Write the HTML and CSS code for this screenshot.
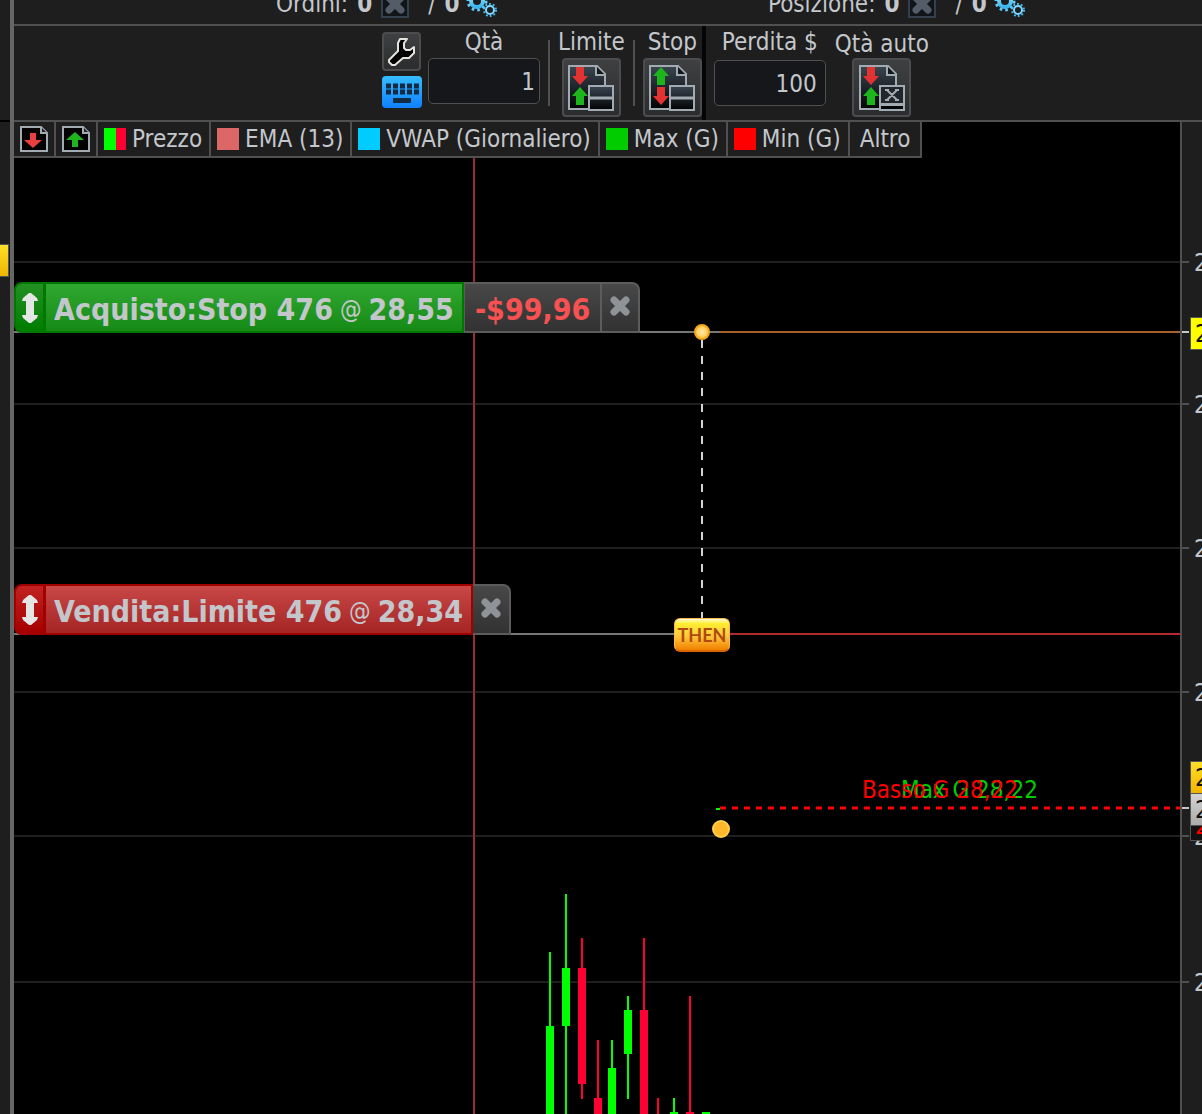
FILE: index.html
```
<!DOCTYPE html>
<html lang="it">
<head>
    <meta charset="UTF-8">
    <meta name="viewport" content="width=device-width, initial-scale=1.0">
    <title>Grafico ordini</title>
    <link rel="stylesheet" href="styles.css">
</head>
<body>
    <!-- Shared icon shapes -->
    <svg class="defs" aria-hidden="true">
        <defs>
            <linearGradient id="page" x1="0" y1="0" x2="0" y2="1">
                <stop offset="0" stop-color="#3a4651"/>
                <stop offset="1" stop-color="#020203"/>
            </linearGradient>
            <linearGradient id="gear" x1="0" y1="0" x2="0" y2="1">
                <stop offset="0" stop-color="#9fe2ff"/>
                <stop offset="1" stop-color="#36b4ee"/>
            </linearGradient>
            <linearGradient id="blue" x1="0" y1="0" x2="0" y2="1">
                <stop offset="0" stop-color="#36bcff"/>
                <stop offset="1" stop-color="#0f80ff"/>
            </linearGradient>
            <radialGradient id="dot">
                <stop offset="0" stop-color="#ffe9a8"/>
                <stop offset="1" stop-color="#ffc445"/>
            </radialGradient>
            <symbol id="i-doc" viewBox="0 0 46 46">
                <path d="M1 1h28l8 8v35H1z" fill="url(#page)" stroke="#a3abb2" stroke-width="2"/>
                <path d="M28 1v9h9" fill="#15181b" stroke="#a3abb2" stroke-width="2"/>
            </symbol>
            <symbol id="i-up" viewBox="0 0 16 18">
                <path d="M8 0l8 9h-4v9H4V9H0z"/>
            </symbol>
            <symbol id="i-down" viewBox="0 0 16 18">
                <path d="M8 18l8-9h-4V0H4v9H0z"/>
            </symbol>
            <symbol id="i-gears" viewBox="0 0 32 28">
                <circle cx="11" cy="11" r="6" fill="none" stroke="url(#gear)" stroke-width="4"/>
                <circle cx="11" cy="11" r="9" fill="none" stroke="#62cbf8" stroke-width="3" stroke-dasharray="2.6 3"/>
                <circle cx="24" cy="20" r="4" fill="none" stroke="#7fd8ff" stroke-width="2"/>
                <circle cx="24" cy="20" r="6" fill="none" stroke="#44bdf2" stroke-width="2" stroke-dasharray="1.8 2"/>
            </symbol>
            <symbol id="i-x" viewBox="0 0 20 20">
                <path d="M4 4l12 12M16 4L4 16" fill="none" stroke-width="7" stroke-linecap="round"/>
            </symbol>
            <symbol id="i-move" viewBox="0 0 16 30">
                <path d="M7 0h2l6 5 1 3h-4v14h4l-1 3-6 5H7l-6-5-1-3h4V8H0l1-3z"/>
            </symbol>
        </defs>
    </svg>

    <aside class="side">
        <div class="side-tag"></div>
    </aside>

    <main class="main">
        <div class="counters">
            <div class="counter orders">
                <span>Ordini:</span>
                <b>0</b>
                <button class="btn-clear" aria-label="Annulla ordini"><svg width="20" height="20"><use href="#i-x"/></svg></button>
                <span>/</span>
                <b>0</b>
                <svg class="gears" width="32" height="28"><use href="#i-gears"/></svg>
            </div>
            <div class="counter">
                <span>Posizione:</span>
                <b>0</b>
                <button class="btn-clear" aria-label="Chiudi posizione"><svg width="20" height="20"><use href="#i-x"/></svg></button>
                <span>/</span>
                <b>0</b>
                <svg class="gears" width="32" height="28"><use href="#i-gears"/></svg>
            </div>
        </div>

        <div class="toolbar">
            <div class="tools">
                <button class="btn btn-small" aria-label="Impostazioni">
                    <svg width="28" height="28" viewBox="0 0 28 28">
                        <path d="M12 1h7l-3 4v5l2 2h4l4-3v6l-5 5h-6l-8 7H4l-3-3v-2l9-9V5z" fill="#000" stroke="#e6e3de" stroke-width="2" stroke-linejoin="round"/>
                    </svg>
                </button>
                <button class="btn-keys" aria-label="Tastiera">
                    <svg width="40" height="32" viewBox="0 0 40 32">
                        <rect width="40" height="32" rx="4" fill="url(#blue)"/>
                        <path d="M4 10h33M4 16h33" stroke="#122b42" stroke-width="5" stroke-dasharray="5 2"/>
                        <rect x="11" y="22" width="18" height="5" rx="1" fill="#122b42"/>
                    </svg>
                </button>
            </div>
            <div class="field">
                <label for="qty">Qtà</label>
                <input class="qty" id="qty" type="text" value="1">
            </div>
            <div class="divider"></div>
            <div class="field">
                <label for="limit">Limite</label>
                <button class="btn btn-big" id="limit">
                    <svg width="46" height="46">
                        <use href="#i-doc" width="46" height="46"/>
                        <use href="#i-down" x="4" y="2" width="16" height="18" fill="#e23232"/>
                        <use href="#i-up" x="4" y="22" width="16" height="18" fill="#1cb51c"/>
                        <rect x="21" y="21" width="24" height="24" fill="url(#page)" stroke="#a3abb2" stroke-width="2"/>
                        <path d="M21 33h24" stroke="#a3abb2" stroke-width="3"/>
                    </svg>
                </button>
            </div>
            <div class="divider"></div>
            <div class="field stop">
                <label for="stop">Stop</label>
                <button class="btn btn-big" id="stop">
                    <svg width="46" height="46">
                        <use href="#i-doc" width="46" height="46"/>
                        <use href="#i-up" x="4" y="2" width="16" height="18" fill="#1cb51c"/>
                        <use href="#i-down" x="4" y="22" width="16" height="18" fill="#e23232"/>
                        <rect x="21" y="21" width="24" height="24" fill="url(#page)" stroke="#a3abb2" stroke-width="2"/>
                        <path d="M21 33h24" stroke="#a3abb2" stroke-width="3"/>
                    </svg>
                </button>
            </div>
            <div class="field loss">
                <label for="loss">Perdita $</label>
                <input id="loss" type="text" value="100">
            </div>
            <div class="field auto">
                <label for="auto">Qtà auto</label>
                <button class="btn btn-big" id="auto">
                    <svg width="46" height="46">
                        <use href="#i-doc" width="46" height="46"/>
                        <use href="#i-down" x="4" y="2" width="16" height="18" fill="#e23232"/>
                        <use href="#i-up" x="4" y="22" width="16" height="18" fill="#1cb51c"/>
                        <rect x="21" y="21" width="24" height="24" fill="#050607" stroke="#a3abb2" stroke-width="2"/>
                        <rect x="21" y="21" width="24" height="18" fill="#20262c" stroke="#a3abb2" stroke-width="2"/>
                        <path d="M28 25l10 10M38 25L28 35M26 25h4M36 25h4M26 35h4M36 35h4M22 40h22" fill="none" stroke="#a3abb2" stroke-width="2"/>
                    </svg>
                </button>
            </div>
        </div>

        <div class="workspace">
            <div class="chart">
                <svg class="plot" width="100%" height="100%">
                    <g class="grid">
                        <rect y="139" width="100%" height="2"/>
                        <rect y="281" width="100%" height="2"/>
                        <rect y="425" width="100%" height="2"/>
                        <rect y="569" width="100%" height="2"/>
                        <rect y="713" width="100%" height="2"/>
                        <rect y="859" width="100%" height="2"/>
                    </g>
                    <rect x="459" width="2" height="100%" fill="#9a2d33"/>

                    <!-- Order lines -->
                    <rect y="209" width="100%" height="2" fill="#a5642f"/>
                    <rect y="209" width="706" height="2" fill="#777"/>
                    <rect y="511" width="100%" height="2" fill="#b52a31"/>
                    <rect y="511" width="688" height="2" fill="#777"/>
                    <line x1="688" y1="218" x2="688" y2="496" stroke="#d0d3d8" stroke-width="2" stroke-dasharray="8 8"/>
                    <circle cx="688" cy="210" r="7" fill="url(#dot)" stroke="#f5a614" stroke-width="2"/>

                    <!-- Daily high and low -->
                    <rect x="702" y="686" width="4" height="2" fill="#00ff00"/>
                    <line x1="706" y1="686" x2="100%" y2="686" stroke="#ff0000" stroke-width="3" stroke-dasharray="6 6"/>
                    <circle cx="707" cy="707" r="8" fill="#ffb72b" stroke="#ffcf45" stroke-width="2"/>
                    <text x="887" y="676" fill="#00cc00">Max G 28,22</text>
                    <text x="848" y="676" fill="#ff0000">Basso G 28,22</text>

                    <g id="candles"></g>
                </svg>

                <div class="legend">
                    <button class="icon" aria-label="Riduci">
                        <svg width="28" height="26">
                            <path d="M1 1h20l6 6v18H1z" fill="#000" stroke="#a3abb2" stroke-width="2"/>
                            <path d="M21 1v6h6" fill="#222" stroke="#a3abb2" stroke-width="2"/>
                            <path d="M13 22l9-8h-6V7h-6v7H4z" fill="#e8403c"/>
                        </svg>
                    </button>
                    <button class="icon" aria-label="Espandi">
                        <svg width="28" height="26">
                            <path d="M1 1h20l6 6v18H1z" fill="#000" stroke="#a3abb2" stroke-width="2"/>
                            <path d="M21 1v6h6" fill="#222" stroke="#a3abb2" stroke-width="2"/>
                            <path d="M13 6l9 8h-6v7h-6v-7H4z" fill="#1fb51f"/>
                        </svg>
                    </button>
                    <button><i class="swatch price"></i>Prezzo</button>
                    <button><i class="swatch ema"></i>EMA (13)</button>
                    <button><i class="swatch vwap"></i>VWAP (Giornaliero)</button>
                    <button><i class="swatch max"></i>Max (G)</button>
                    <button><i class="swatch min"></i>Min (G)</button>
                    <button class="more">Altro</button>
                </div>

                <div class="order buy">
                    <button class="handle" aria-label="Sposta"><svg width="16" height="30"><use href="#i-move"/></svg></button>
                    <div class="order-text">Acquisto:Stop 476 <span class="at">@</span> 28,55</div>
                    <div class="pnl">-$99,96</div>
                    <button class="close" aria-label="Annulla"><svg width="20" height="20"><use href="#i-x"/></svg></button>
                </div>
                <div class="order sell">
                    <button class="handle" aria-label="Sposta"><svg width="16" height="30"><use href="#i-move"/></svg></button>
                    <div class="order-text">Vendita:Limite 476 <span class="at">@</span> 28,34</div>
                    <button class="close" aria-label="Annulla"><svg width="20" height="20"><use href="#i-x"/></svg></button>
                </div>
                <div class="then">THEN</div>
            </div>

            <div class="axis" id="axis"></div>
        </div>
    </main>

    <script src="chart.js"></script>
</body>
</html>
```
FILE: styles.css
```
* {
    box-sizing: border-box;
}
body {
    margin: 0;
    height: 100vh;
    display: flex;
    overflow: hidden;
    background-color: #1e1e1e;
    color: #c3c7cc;
    fill: #c3c7cc;
    font-family: "DejaVu Sans Condensed", "Noto Sans", sans-serif;
    font-size: 24px;
    line-height: 28px;
}
button, input {
    font: inherit;
    color: inherit;
    margin: 0;
    padding: 0;
    border: none;
    background: none;
}
button {
    display: flex;
    align-items: center;
    justify-content: center;
    cursor: pointer;
}
.defs {
    position: absolute;
    width: 0;
    height: 0;
}

/* Left panel */
.side {
    width: 10px;
    flex: none;
    padding-top: 244px;
    background: linear-gradient(#000, #000) 0 120px / 100% 2px no-repeat;
}
.side-tag {
    width: 9px;
    height: 33px;
    border: 1px solid #555;
    border-left: none;
    background: linear-gradient(#ffe028, #f0b400);
}
.main {
    flex: 1;
    min-width: 0;
    display: flex;
    flex-direction: column;
    border-left: 4px solid #666;
}

/* Counters */
.counters {
    height: 26px;
    flex: none;
    display: flex;
    align-items: flex-end;
    padding: 0 0 6px 262px;
    border-bottom: 2px solid #505050;
}
.counter {
    display: flex;
    align-items: center;
    gap: 9px;
}
.orders {
    width: 492px;
}
.btn-clear {
    width: 28px;
    height: 28px;
    margin-right: 10px;
    border: 2px solid #33404d;
    background-color: #111519;
    stroke: #545d67;
}
.gears {
    margin-left: -2px;
}

/* Toolbar */
.toolbar {
    height: 96px;
    flex: none;
    display: flex;
    align-items: stretch;
    padding-left: 368px;
    border-bottom: 2px solid #505050;
    white-space: nowrap;
}
.tools {
    padding-top: 6px;
    margin-right: 6px;
}
.btn {
    border: 2px solid #4c4c4e;
    border-radius: 4px;
    background: linear-gradient(#3f4042, #2b2c2e);
}
.btn-small {
    width: 39px;
    height: 39px;
    margin-bottom: 5px;
}
.btn-big {
    width: 59px;
    height: 59px;
}
.field {
    display: flex;
    flex-direction: column;
    align-items: center;
    padding-top: 2px;
}
.field label {
    height: 30px;
}
.field input {
    width: 112px;
    height: 46px;
    padding: 2px 8px 0 0;
    border: 1px solid #505050;
    border-radius: 5px;
    background-color: #16171a;
    text-align: right;
}
.field .qty {
    padding-right: 4px;
}
.divider {
    width: 2px;
    height: 66px;
    margin: 14px 8px 0;
    background-color: #505050;
}
.field.stop {
    border-right: 4px solid #050508;
}
.stop + .loss {
    margin-left: 8px;
}
.field.loss label {
    height: 32px;
}
.auto label {
    padding-top: 2px;
}
.auto {
    margin-left: 9px;
}

/* Chart */
.workspace {
    flex: 1;
    min-height: 0;
    display: flex;
}
.chart {
    flex: 1;
    min-width: 0;
    position: relative;
    overflow: hidden;
    background-color: #000;
}
.plot {
    position: absolute;
    top: 0;
    left: 0;
}
.grid {
    fill: #1f1f1f;
}
.wick.up, .body.up {
    fill: #00ff00;
}
.wick.down, .body.down {
    fill: #ff0033;
}
.legend {
    position: relative;
    display: inline-flex;
    vertical-align: top;
    background-color: #1e1e1e;
    border-bottom: 2px solid #505050;
}
.legend button {
    height: 34px;
    padding: 0 7px 0 6px;
    border-right: 2px solid #505050;
    box-sizing: content-box;
    white-space: nowrap;
}
.legend .icon {
    padding: 0 6px;
}
.legend .more {
    padding: 0 10px;
}
.swatch {
    width: 22px;
    height: 22px;
    margin-right: 6px;
}
.price {
    background: linear-gradient(to right, #00ff00 12px, #ff0033 12px);
}
.ema {
    background-color: #dd6666;
}
.vwap {
    background-color: #00ccff;
}
.max {
    background-color: #00cc00;
}
.min {
    background-color: #ff0000;
}

/* Orders drawn over the chart */
.order {
    position: absolute;
    left: 0;
    height: 51px;
    display: flex;
    font-size: 30px;
    font-weight: bold;
    white-space: nowrap;
}
.buy {
    top: 160px;
}
.sell {
    top: 462px;
}
.handle {
    width: 31px;
    border-radius: 8px 0 0 8px;
    fill: #e4e6e6;
}
.order-text, .pnl {
    display: flex;
    align-items: center;
    padding: 4px 8px 0;
    border: 2px solid;
    border-left-width: 1px;
}
.pnl {
    padding: 4px 10px 0;
}
.at {
    padding: 0 7px;
    font-size: 24px;
    font-weight: normal;
}
.buy .handle {
    border: 2px solid #007800;
    background: linear-gradient(#239023, #007d00);
}
.buy .order-text {
    border-color: #007800;
    background: linear-gradient(#30a830, #168a16);
}
.sell .handle {
    border: 2px solid #a00000;
    background: linear-gradient(#c32222, #a40000);
}
.sell .order-text {
    border-color: #a00000;
    background: linear-gradient(#c84848, #a52525);
}
.order .pnl {
    color: #f85151;
    border-color: #5c5c5c;
    background: linear-gradient(#484848, #323232);
}
.close {
    width: 38px;
    padding-bottom: 3px;
    border: 2px solid #5c5c5c;
    border-left: none;
    border-top-right-radius: 8px;
    background: linear-gradient(#484848, #323232);
    stroke: #8f9398;
}
.then {
    position: absolute;
    left: 660px;
    top: 496px;
    width: 56px;
    height: 34px;
    border-radius: 6px;
    border: 1px solid #ffb648;
    border-bottom: 2px solid #d96400;
    background: linear-gradient(#fffbd0, #ffee30 15%, #ffc83c 55%, #f08000);
    color: #b04a10;
    font-family: Lato, sans-serif;
    font-size: 18px;
    font-weight: bold;
    line-height: 33px;
    text-align: center;
}

/* Price axis */
.axis {
    width: 22px;
    flex: none;
    position: relative;
    overflow: hidden;
    border-left: 2px solid #505050;
}
.mark {
    position: absolute;
    left: 0;
    height: 28px;
    padding-left: 12px;
    line-height: 30px;
}
.mark::before {
    content: "";
    position: absolute;
    left: 0;
    top: 13px;
    width: 7px;
    height: 2px;
    background-color: #505050;
}
.mark.light::before {
    background-color: #c3c7cc;
}
.tag {
    position: absolute;
    left: 8px;
    width: 60px;
    height: 33px;
    padding-left: 4px;
    border: 1px solid #555;
    line-height: 32px;
    color: #111;
}
.tag.buy-price {
    background-color: #ffff00;
}
.tag.ask {
    background: linear-gradient(#ffe028, #f0b400);
}
.tag.last {
    background: linear-gradient(#d4d4d4, #aaa);
}
.tag.low {
    height: 17px;
    overflow: hidden;
    background-color: #111;
    color: #ff0000;
    line-height: 2px;
}
```
FILE: chart.js
```
// x, colour, wick top, wick bottom, body top, body bottom
const candles = [
    [536, 'up', 830, 992, 904, 992],
    [552, 'up', 772, 992, 846, 904],
    [568, 'down', 816, 977, 846, 962],
    [584, 'down', 918, 992, 976, 992],
    [598, 'up', 918, 992, 946, 992],
    [614, 'up', 874, 977, 888, 932],
    [630, 'down', 816, 992, 888, 992],
    [644, 'down', 976, 992, 992, 992],
    [660, 'up', 976, 992, 990, 992],
    [676, 'down', 874, 992, 990, 992],
    [692, 'up', 990, 992, 990, 992]
];

let shapes = '';
candles.forEach(([x, dir, high, low, top, bottom]) => {
    shapes += `<rect class="wick ${dir}" x="${x - 1}" y="${high}" width="2" height="${low - high}"/>`;
    shapes += `<rect class="body ${dir}" x="${x - 4}" y="${top}" width="8" height="${bottom - top}"/>`;
});
document.getElementById('candles').innerHTML = shapes;

// Price axis: y, css class, text
const marks = [
    [140, 'mark', '2'],
    [282, 'mark', '2'],
    [426, 'mark', '2'],
    [570, 'mark', '2'],
    [714, 'mark', '2'],
    [860, 'mark', '2'],
    [210, 'mark light', ''],
    [686, 'mark light', ''],
    [211, 'tag buy-price', '2'],
    [718, 'tag low', '2'],
    [655, 'tag ask', '2'],
    [687, 'tag last', '2']
];

const axis = document.getElementById('axis');
marks.forEach(([y, cls, text]) => {
    const el = document.createElement('div');
    el.className = cls;
    el.textContent = text;
    el.style.top = (cls.startsWith('mark') ? y - 14 : y - 16) + 'px';
    axis.appendChild(el);
});
```
